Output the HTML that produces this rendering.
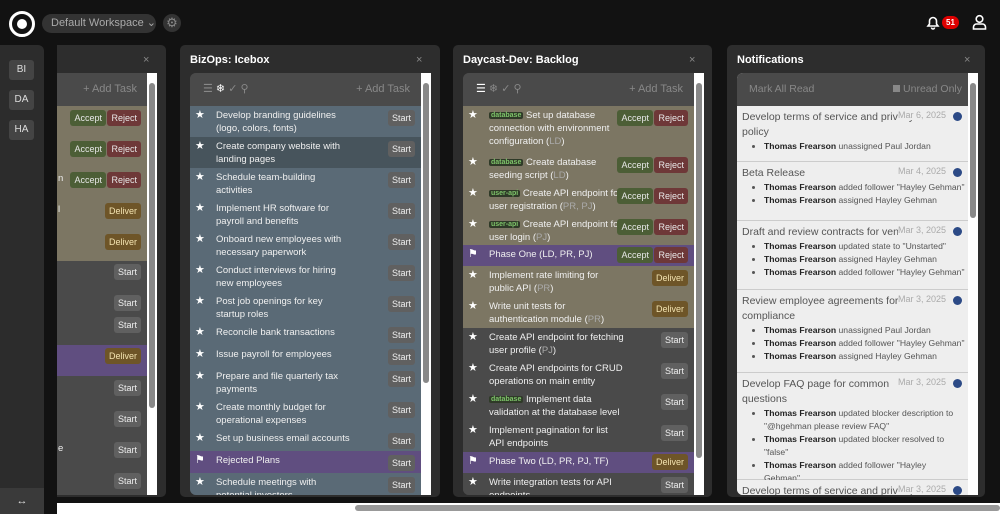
<!DOCTYPE html>
<html><head><style>
*{box-sizing:border-box;margin:0;padding:0}
body{width:1000px;height:514px;background:#121212;font-family:"Liberation Sans",sans-serif;position:relative;overflow:hidden;color:#eee}
.abs{position:absolute}
.side{left:0;top:45px;width:44px;height:469px;background:#2c2c2c;border-radius:0 6px 0 0}
.sb{left:9px;width:25px;height:20px;background:#444;border-radius:3px;font-size:10px;color:#ddd;text-align:center;line-height:20px}
.panel{top:45px;height:452px;background:#2d2d2d;border-radius:5px}
.ptitle{font-size:11px;font-weight:bold;color:#fff}
.x{font-size:11px;color:#888}
.list{top:73px;height:422px;overflow:hidden;border-radius:6px 0 0 6px;background:#4a4a4a}
.tb{height:33px;background:#4a4a4a;position:relative;font-size:11px;color:#888}
.row{position:relative;font-size:9.5px;line-height:13px;color:#f0f0f0;padding:3px 0 0 26px}
.row .t{width:134px;display:block}
.row .nw{white-space:nowrap}
.star{position:absolute;left:5px;top:3px;font-size:11px;color:#fff}
.btn{position:absolute;top:4px;font-size:9px;padding:0 4px;height:16px;line-height:16px;border-radius:3px}
.st{background:#606060;color:#eee;right:6px}
.ac{background:#4c5e36;color:#e8e8e8}
.rj{background:#6e3838;color:#e8e8e8;right:6px}
.dv{background:#6e5528;color:#f3e3b0;right:6px}
.tan{background:#7c7663}.blu{background:#5a6a76}.pur{background:#604e80}.gr{background:#4a4a4a}
.tag{background:#2f3a28;color:#7ec46a;font-size:7px;padding:0 2px;border-radius:2px;vertical-align:1px;font-weight:bold}
.dim{color:#aaa}
.vs{width:10px;background:#fff;top:73px;height:422px}
.vs i{position:absolute;left:2px;width:6px;background:#888;border-radius:3px}
.notif{background:#eee;color:#555;position:relative;border-bottom:1px solid #ccc;padding:4px 6px 4px 5px}
.notif .h{font-size:10.5px;line-height:15px;color:#555;width:185px}
.notif .d{position:absolute;right:22px;top:4px;font-size:9px;color:#aaa;background:#eee}
.notif .dot{position:absolute;right:6px;top:6px;width:9px;height:9px;border-radius:50%;background:#2c4a86}
.notif ul{margin-left:22px;font-size:8.6px;line-height:13px;color:#555;white-space:nowrap}
.notif b{color:#222}
</style></head><body>
<div class="abs" style="left:9px;top:11px;width:26px;height:26px;border:3px solid #fff;border-radius:50%"></div>
<div class="abs" style="left:17px;top:19px;width:10px;height:10px;background:#fff;border-radius:50%"></div>
<div class="abs" style="left:42px;top:14px;width:114px;height:19px;background:#333;border-radius:10px;font-size:11px;color:#aaa;line-height:19px;padding-left:9px">Default Workspace ⌄</div>
<div class="abs" style="left:163px;top:14px;width:18px;height:18px;background:#333;border-radius:50%;color:#888;font-size:13px;text-align:center;line-height:18px">⚙</div>
<svg class="abs" style="left:925px;top:14px" width="16" height="16" viewBox="0 0 16 16"><path d="M3 12h10l-1.5-2V7a3.5 3.5 0 0 0-7 0v3z M6.5 13.5a1.5 1.5 0 0 0 3 0" fill="none" stroke="#fff" stroke-width="1.6"/></svg>
<div class="abs" style="left:942px;top:16px;width:17px;height:13px;background:#d00;border-radius:7px;font-size:8px;font-weight:bold;color:#fff;text-align:center;line-height:13px">51</div>
<svg class="abs" style="left:972px;top:14px" width="15" height="16" viewBox="0 0 15 16"><circle cx="7.5" cy="5" r="3.3" fill="none" stroke="#fff" stroke-width="1.6"/><path d="M1.5 15v-2a3 3 0 0 1 3-3h6a3 3 0 0 1 3 3v2z" fill="none" stroke="#fff" stroke-width="1.6"/></svg>
<div class="abs side"></div>
<div class="abs sb" style="top:60px">BI</div>
<div class="abs sb" style="top:90px">DA</div>
<div class="abs sb" style="top:120px">HA</div>
<div class="abs" style="left:0;top:488px;width:44px;height:26px;background:#3a3a3a;color:#ddd;font-size:11px;text-align:center;line-height:26px">↔</div>

<div class="abs panel" style="left:57px;width:109px;border-radius:0 5px 5px 0"></div>
<div class="abs x" style="left:143px;top:54px">×</div>
<div class="abs list" style="left:57px;width:90px;border-radius:0">
 <div class="tb"><span class="abs" style="right:10px;top:10px">+ Add Task</span></div>
 <div class="tan" style="height:155px;position:relative">
  <span class="btn ac" style="right:41px;top:4px">Accept</span><span class="btn rj" style="top:4px">Reject</span>
  <span class="btn ac" style="right:41px;top:35px">Accept</span><span class="btn rj" style="top:35px">Reject</span>
  <span class="abs" style="left:1px;top:67px;font-size:9.5px">n</span><span class="btn ac" style="right:41px;top:66px">Accept</span><span class="btn rj" style="top:66px">Reject</span>
  <span class="abs" style="left:1px;top:98px;font-size:9.5px">l</span><span class="btn dv" style="top:97px">Deliver</span>
  <span class="btn dv" style="top:128px">Deliver</span>
 </div>
 <div class="gr" style="height:84px;position:relative"><span class="btn st" style="top:3px">Start</span><span class="btn st" style="top:34px">Start</span><span class="btn st" style="top:56px">Start</span></div>
 <div class="pur" style="height:31px;position:relative"><span class="btn dv" style="top:3px">Deliver</span></div>
 <div class="gr" style="height:150px;position:relative"><span class="btn st" style="top:4px">Start</span><span class="btn st" style="top:35px">Start</span><span class="abs" style="left:1px;top:67px;font-size:9.5px">e</span><span class="btn st" style="top:66px">Start</span><span class="btn st" style="top:97px">Start</span></div>
</div>
<div class="abs vs" style="left:147px"><i style="top:10px;height:325px"></i></div>

<div class="abs panel" style="left:180px;width:260px"></div>
<div class="abs ptitle" style="left:190px;top:54px">BizOps: Icebox</div>
<div class="abs x" style="left:416px;top:54px">×</div>
<div class="abs list" style="left:190px;width:231px">
 <div class="tb"><span class="abs" style="left:13px;top:9px">☰ <span style="color:#fff">❄</span> ✓ ⚲</span><span class="abs" style="right:11px;top:10px">+ Add Task</span></div>
 <div class="row blu" style="height:31px"><span class="star">★</span><span class="t">Develop branding guidelines (logo, colors, fonts)</span><span class="btn st">Start</span></div>
 <div class="row" style="height:31px;background:#47545c"><span class="star">★</span><span class="t">Create company website with landing pages</span><span class="btn st">Start</span></div>
 <div class="row blu" style="height:31px"><span class="star">★</span><span class="t">Schedule team-building activities</span><span class="btn st">Start</span></div>
 <div class="row blu" style="height:31px"><span class="star">★</span><span class="t">Implement HR software for payroll and benefits</span><span class="btn st">Start</span></div>
 <div class="row blu" style="height:31px"><span class="star">★</span><span class="t">Onboard new employees with necessary paperwork</span><span class="btn st">Start</span></div>
 <div class="row blu" style="height:31px"><span class="star">★</span><span class="t">Conduct interviews for hiring new employees</span><span class="btn st">Start</span></div>
 <div class="row blu" style="height:31px"><span class="star">★</span><span class="t">Post job openings for key startup roles</span><span class="btn st">Start</span></div>
 <div class="row blu" style="height:22px"><span class="star">★</span><span class="t" style="width:160px">Reconcile bank transactions</span><span class="btn st">Start</span></div>
 <div class="row blu" style="height:22px"><span class="star">★</span><span class="t" style="width:160px">Issue payroll for employees</span><span class="btn st">Start</span></div>
 <div class="row blu" style="height:31px"><span class="star">★</span><span class="t">Prepare and file quarterly tax payments</span><span class="btn st">Start</span></div>
 <div class="row blu" style="height:31px"><span class="star">★</span><span class="t">Create monthly budget for operational expenses</span><span class="btn st">Start</span></div>
 <div class="row blu" style="height:22px"><span class="star">★</span><span class="t" style="width:160px">Set up business email accounts</span><span class="btn st">Start</span></div>
 <div class="row pur" style="height:22px"><span class="star">⚑</span><span class="t">Rejected Plans</span><span class="btn st">Start</span></div>
 <div class="row blu" style="height:40px"><span class="star">★</span><span class="t">Schedule meetings with potential investors</span><span class="btn st">Start</span></div>
</div>
<div class="abs vs" style="left:421px"><i style="top:10px;height:300px"></i></div>

<div class="abs panel" style="left:453px;width:259px"></div>
<div class="abs ptitle" style="left:463px;top:54px">Daycast-Dev: Backlog</div>
<div class="abs x" style="left:689px;top:54px">×</div>
<div class="abs list" style="left:463px;width:231px">
 <div class="tb"><span class="abs" style="left:13px;top:9px"><span style="color:#fff">☰</span> ❄ ✓ ⚲</span><span class="abs" style="right:11px;top:10px">+ Add Task</span></div>
 <div class="row tan" style="height:47px"><span class="star">★</span><span class="t nw"><span class="tag">database</span> Set up database<br>connection with environment<br>configuration (<span class="dim">LD</span>)</span><span class="btn ac" style="right:41px">Accept</span><span class="btn rj">Reject</span></div>
 <div class="row tan" style="height:31px"><span class="star">★</span><span class="t nw"><span class="tag">database</span> Create database<br>seeding script (<span class="dim">LD</span>)</span><span class="btn ac" style="right:41px">Accept</span><span class="btn rj">Reject</span></div>
 <div class="row tan" style="height:31px"><span class="star">★</span><span class="t nw"><span class="tag">user-api</span> Create API endpoint for<br>user registration (<span class="dim">PR, PJ</span>)</span><span class="btn ac" style="right:41px">Accept</span><span class="btn rj">Reject</span></div>
 <div class="row tan" style="height:30px"><span class="star">★</span><span class="t nw"><span class="tag">user-api</span> Create API endpoint for<br>user login (<span class="dim">PJ</span>)</span><span class="btn ac" style="right:41px">Accept</span><span class="btn rj">Reject</span></div>
 <div class="row pur" style="height:21px"><span class="star">⚑</span><span class="t">Phase One (LD, PR, PJ)</span><span class="btn ac" style="right:41px;top:2px">Accept</span><span class="btn rj" style="top:2px">Reject</span></div>
 <div class="row tan" style="height:31px"><span class="star">★</span><span class="t">Implement rate limiting for public API (<span class="dim">PR</span>)</span><span class="btn dv">Deliver</span></div>
 <div class="row tan" style="height:31px"><span class="star">★</span><span class="t">Write unit tests for authentication module (<span class="dim">PR</span>)</span><span class="btn dv">Deliver</span></div>
 <div class="row gr" style="height:31px"><span class="star">★</span><span class="t nw">Create API endpoint for fetching<br>user profile (<span class="dim">PJ</span>)</span><span class="btn st">Start</span></div>
 <div class="row gr" style="height:31px"><span class="star">★</span><span class="t nw">Create API endpoints for CRUD<br>operations on main entity</span><span class="btn st">Start</span></div>
 <div class="row gr" style="height:31px"><span class="star">★</span><span class="t nw"><span class="tag">database</span> Implement data<br>validation at the database level</span><span class="btn st">Start</span></div>
 <div class="row gr" style="height:31px"><span class="star">★</span><span class="t">Implement pagination for list API endpoints</span><span class="btn st">Start</span></div>
 <div class="row pur" style="height:21px"><span class="star">⚑</span><span class="t">Phase Two (LD, PR, PJ, TF)</span><span class="btn dv" style="top:2px">Deliver</span></div>
 <div class="row gr" style="height:40px"><span class="star">★</span><span class="t">Write integration tests for API endpoints</span><span class="btn st">Start</span></div>
</div>
<div class="abs vs" style="left:694px"><i style="top:10px;height:375px"></i></div>

<div class="abs panel" style="left:727px;width:258px"></div>
<div class="abs ptitle" style="left:737px;top:54px">Notifications</div>
<div class="abs x" style="left:964px;top:54px">×</div>
<div class="abs list" style="left:737px;width:231px;background:#eee">
 <div class="tb" style="font-size:10.5px"><span class="abs" style="left:12px;top:10px">Mark All Read</span><span class="abs" style="right:6px;top:10px"><span style="display:inline-block;width:7px;height:7px;background:#888"></span> Unread Only</span></div>
 <div class="notif" style="height:56px"><div class="h" style="width:175px">Develop terms of service and privacy policy</div><span class="d">Mar 6, 2025</span><span class="dot"></span><ul><li><b>Thomas Frearson</b> unassigned Paul Jordan</li></ul></div>
 <div class="notif" style="height:59px"><div class="h">Beta Release</div><span class="d">Mar 4, 2025</span><span class="dot"></span><ul><li><b>Thomas Frearson</b> added follower "Hayley Gehman"</li><li><b>Thomas Frearson</b> assigned Hayley Gehman</li></ul></div>
 <div class="notif" style="height:69px"><div class="h" style="white-space:nowrap">Draft and review contracts for vendors</div><span class="d">Mar 3, 2025</span><span class="dot"></span><ul><li><b>Thomas Frearson</b> updated state to "Unstarted"</li><li><b>Thomas Frearson</b> assigned Hayley Gehman</li><li><b>Thomas Frearson</b> added follower "Hayley Gehman"</li></ul></div>
 <div class="notif" style="height:83px"><div class="h" style="width:160px">Review employee agreements for compliance</div><span class="d">Mar 3, 2025</span><span class="dot"></span><ul><li><b>Thomas Frearson</b> unassigned Paul Jordan</li><li><b>Thomas Frearson</b> added follower "Hayley Gehman"</li><li><b>Thomas Frearson</b> assigned Hayley Gehman</li></ul></div>
 <div class="notif" style="height:107px"><div class="h" style="width:160px">Develop FAQ page for common questions</div><span class="d">Mar 3, 2025</span><span class="dot"></span><ul style="white-space:normal;width:190px"><li><b>Thomas Frearson</b> updated blocker description to "@hgehman please review FAQ"</li><li><b>Thomas Frearson</b> updated blocker resolved to "false"</li><li><b>Thomas Frearson</b> added follower "Hayley Gehman"</li></ul></div>
 <div class="notif" style="height:40px"><div class="h" style="white-space:nowrap;overflow:hidden">Develop terms of service and privacy</div><span class="d">Mar 3, 2025</span><span class="dot"></span></div>
</div>
<div class="abs vs" style="left:968px"><i style="top:10px;height:135px"></i></div>

<div class="abs" style="left:57px;top:503px;width:943px;height:11px;background:#fff"></div>
<div class="abs" style="left:355px;top:505px;width:645px;height:6px;background:#999;border-radius:3px"></div>
</body></html>
